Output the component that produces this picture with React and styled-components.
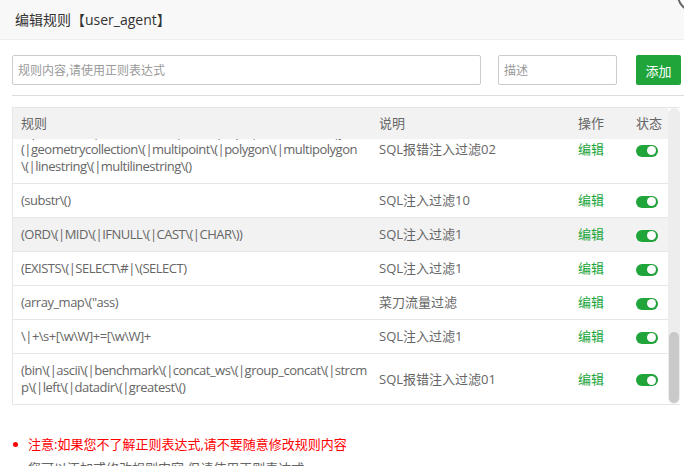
import React, { useLayoutEffect, useRef, useState } from "react";
import styled, { createGlobalStyle } from "styled-components";

const hiddenRules = [
  {
    lines: [
      String.raw`(HTTrack|harvest|audit|dirbuster|pangolin|nmap|sqln|-scan|hydr`,
      String.raw`a|Parser|libwww|BBBike|sqlmap|w3af|owasp|Nikto|fimap|havij|Py`,
      String.raw`cURL|zmeu|BabyKrokodil|netsparker|httperf|bench| SF/)`,
    ],
    desc: "扫描器过滤",
  },
  { lines: [String.raw`(sqlmap|nikto|nessus|acunetix|webscan)`], desc: "扫描器过滤2" },
  { lines: [String.raw`\.\./\.\./`], desc: "目录穿越过滤" },
  { lines: [String.raw`(select.+(from|limit))`], desc: "SQL注入过滤2" },
  { lines: [String.raw`(union(.*?)select)`], desc: "SQL注入过滤3" },
  {
    lines: [
      String.raw`(extractvalue\(|concat\(0x|user\(\)|substring\(|count\(\*\)|sub`,
      String.raw`string\(hex\(|updatexml\()`,
    ],
    desc: "SQL报错注入过滤03",
  },
  { lines: [String.raw`(sleep\((\s*)(\d*)(\s*)\))`], desc: "SQL注入过滤4" },
  { lines: [String.raw`(benchmark\((.*)\,(.*)\))`], desc: "SQL注入过滤5" },
  { lines: [String.raw`(information_schema)`], desc: "SQL注入过滤6" },
  { lines: [String.raw`(into(\s+)+(?:dump|out)file\s*)`], desc: "SQL注入过滤7" },
  { lines: [String.raw`(group\s+by.+\()`], desc: "SQL注入过滤8" },
  { lines: [String.raw`(load_file\()`], desc: "SQL注入过滤9" },
  {
    lines: [
      String.raw`(\s+(and|or)\s+\d+\s*(=|<|>)\s*\d+)|(\s+(and|or)\s+[\w\W]+\s*`,
      String.raw`(=|<|>))`,
    ],
    desc: "SQL注入过滤11",
  },
  { lines: [String.raw`\<(iframe|script|body|img|layer|div)`], desc: "XSS过滤1" },
  { lines: [String.raw`(onmouseover|onerror|onload)\=`], desc: "XSS过滤2" },
  { lines: [String.raw`(eval|assert|system|passthru)\(`], desc: "一句话木马过滤" },
  { lines: [String.raw`(base64_decode\()`], desc: "一句话木马过滤2" },
  { lines: [String.raw`(phpinfo\(\))`], desc: "PHP信息泄露" },
  { lines: [String.raw`(gopher|dict|file|phar)\:\/`], desc: "伪协议过滤" },
  { lines: [String.raw`(java\.lang)`], desc: "java漏洞过滤" },
  {
    lines: [
      String.raw`(\$_(GET|post|cookie|files|session|env|phplib|GLOBALS|SERVER)\[`,
      ")",
    ],
    desc: "变量覆盖过滤",
  },
  { lines: [String.raw`(\$_(GET|POST|COOKIE|REQUEST)\[)`], desc: "变量注入过滤" },
  { lines: [String.raw`(\.(svn|git|htaccess|bash_history))`], desc: "敏感文件过滤" },
  { lines: [String.raw`(python-requests|Go-http-client)`], desc: "脚本采集过滤" },
];

const visibleRules = [
  {
    lines: [
      String.raw`(updatexml\(|extractvalue\(|floor\(|exp\(|name_const\(|join_` + "\\",
      String.raw`(|geometrycollection\(|multipoint\(|polygon\(|multipolygon`,
      String.raw`\(|linestring\(|multilinestring\()`,
    ],
    desc: "SQL报错注入过滤02",
  },
  { lines: [String.raw`(substr\()`], desc: "SQL注入过滤10" },
  { lines: [String.raw`(ORD\(|MID\(|IFNULL\(|CAST\(|CHAR\))`], desc: "SQL注入过滤1", active: true },
  { lines: [String.raw`(EXISTS\(|SELECT\#|\(SELECT)`], desc: "SQL注入过滤1" },
  { lines: [String.raw`(array_map\("ass)`], desc: "菜刀流量过滤" },
  { lines: [String.raw`\|+\s+[\w\W]+=[\w\W]+`], desc: "SQL注入过滤1" },
  {
    lines: [
      String.raw`(bin\(|ascii\(|benchmark\(|concat_ws\(|group_concat\(|strcm`,
      String.raw`p\(|left\(|datadir\(|greatest\()`,
    ],
    desc: "SQL报错注入过滤01",
  },
];

const rules = [...hiddenRules, ...visibleRules];

const App = () => {
  const boxRef = useRef(null);
  const [thumb, setThumb] = useState(72);

  useLayoutEffect(() => {
    const el = boxRef.current;
    if (!el) return;
    el.scrollTop = el.scrollHeight;
    const track = el.clientHeight - 2;
    setThumb(Math.max(20, Math.round((track * el.clientHeight) / el.scrollHeight)));
  }, []);

  return (
    <Layer>
      <GlobalStyle />
      <Title>编辑规则【user_agent】</Title>
      <CloseBtn />
      <Body>
        <FormRow>
          <Input $width={469} placeholder="规则内容,请使用正则表达式" />
          <Input $width={119} $gap={17} placeholder="描述" />
          <AddButton>添加</AddButton>
        </FormRow>
        <Divider />
        <TableWrap>
          <ScrollArea ref={boxRef}>
            <Table>
              <colgroup>
                <col style={{ width: 358 }} />
                <col style={{ width: 199 }} />
                <col style={{ width: 58 }} />
                <col style={{ width: 40 }} />
              </colgroup>
              <thead>
                <tr>
                  <Th>规则</Th>
                  <Th>说明</Th>
                  <Th>操作</Th>
                  <Th>状态</Th>
                </tr>
              </thead>
              <tbody>
                {rules.map((r, i) => (
                  <Row key={i} $active={r.active}>
                    <RuleCell>
                      {r.lines.map((l, j) => (
                        <React.Fragment key={j}>
                          {j > 0 && <br />}
                          {l}
                        </React.Fragment>
                      ))}
                    </RuleCell>
                    <Td>{r.desc}</Td>
                    <Td>
                      <EditLink>编辑</EditLink>
                    </Td>
                    <Td>
                      <Switch />
                    </Td>
                  </Row>
                ))}
              </tbody>
            </Table>
          </ScrollArea>
          <ScrollTrack>
            <ScrollThumb style={{ height: thumb }} />
          </ScrollTrack>
        </TableWrap>
        <Notes>
          <Note $red>注意:如果您不了解正则表达式,请不要随意修改规则内容</Note>
          <Note>您可以添加或修改规则内容,但请使用正则表达式.</Note>
        </Notes>
      </Body>
    </Layer>
  );
};

export default App;

const GlobalStyle = createGlobalStyle`
  html, body {
    margin: 0;
    padding: 0;
    background: #fff;
    overflow: hidden;
  }
  body {
    font-family: "Open Sans", "Noto Sans CJK SC", sans-serif;
    font-size: 13px;
    color: #666;
  }
`;

const Layer = styled.div`
  position: relative;
  width: 684px;
  height: 466px;
  overflow: hidden;
  background: #fff;
`;

const Title = styled.div`
  height: 39px;
  line-height: 39px;
  padding-left: 15px;
  background: #f8f8f8;
  border-bottom: 1px solid #eee;
  font-size: 14px;
  color: #333;
`;

const CloseBtn = styled.span`
  position: absolute;
  top: -22px;
  right: -27px;
  width: 34px;
  height: 34px;
  box-sizing: border-box;
  border: 2px solid #666;
  border-radius: 50%;
  background: #fff;
`;

const Body = styled.div`
  padding: 15px 0 0 12px;
`;

const FormRow = styled.div`
  display: flex;
  align-items: center;
  height: 30px;
`;

const Input = styled.input`
  box-sizing: border-box;
  width: ${(p) => p.$width}px;
  height: 30px;
  margin-left: ${(p) => p.$gap || 0}px;
  padding: 0 5px;
  border: 1px solid #ccc;
  border-radius: 2px;
  font-family: "Open Sans", "Noto Sans CJK SC", sans-serif;
  font-size: 12px;
  color: #555;
  outline: none;
  &::placeholder {
    color: #999;
  }
`;

const AddButton = styled.button`
  box-sizing: border-box;
  width: 45px;
  height: 30px;
  margin-left: 19px;
  padding: 0;
  border: none;
  border-radius: 2px;
  background: #20a53a;
  color: #fff;
  font-family: "Open Sans", "Noto Sans CJK SC", sans-serif;
  font-size: 13px;
`;

const Divider = styled.div`
  height: 1px;
  margin-top: 10px;
  background: #ddd;
`;

const TableWrap = styled.div`
  display: flex;
  box-sizing: border-box;
  width: 668px;
  height: 298px;
  margin-top: 11px;
  border: 1px solid #e6e6e6;
  border-right: none;
`;

const ScrollArea = styled.div`
  flex: 1;
  min-width: 0;
  overflow-y: auto;
  scrollbar-width: none;
  &::-webkit-scrollbar {
    display: none;
  }
`;

const ScrollTrack = styled.div`
  display: flex;
  flex-direction: column;
  justify-content: flex-end;
  box-sizing: border-box;
  width: 12px;
  padding: 1px;
  background: #ededed;
  border-radius: 6px;
`;

const ScrollThumb = styled.div`
  width: 10px;
  border-radius: 5px;
  background: #c9c9c9;
`;

const Table = styled.table`
  width: 100%;
  table-layout: fixed;
  border-collapse: separate;
  border-spacing: 0;
`;

const Th = styled.th`
  position: sticky;
  top: 0;
  z-index: 1;
  height: 31px;
  box-sizing: border-box;
  padding: 7px 8px;
  line-height: 17px;
  background: #f2f2f2;
  color: #666;
  font-weight: normal;
  text-align: left;
  white-space: nowrap;
`;

const Row = styled.tr`
  background: ${(p) => (p.$active ? "#f2f2f2" : "#fff")};
  &:last-child td {
    border-bottom: none;
  }
`;

const Td = styled.td`
  padding: 8px;
  line-height: 17px;
  border-bottom: 1px solid #e6e6e6;
  vertical-align: middle;
  color: #666;
  white-space: nowrap;
`;

const RuleCell = styled(Td)`
  overflow: hidden;
  letter-spacing: -0.5px;
`;

const EditLink = styled.a`
  color: #20a53a;
  cursor: pointer;
`;

const Switch = styled.span`
  position: relative;
  display: inline-block;
  width: 22px;
  height: 12px;
  border-radius: 6px;
  background: #20a53a;
  vertical-align: middle;
  &::after {
    content: "";
    position: absolute;
    top: 1.5px;
    right: 2px;
    width: 9px;
    height: 9px;
    border-radius: 50%;
    background: #fff;
    box-shadow: 0 0 1px rgba(0, 0, 0, 0.2);
  }
`;

const Notes = styled.ul`
  margin: 27px 0 0;
  padding: 0 0 0 1px;
  list-style: none;
`;

const Note = styled.li`
  display: flex;
  align-items: center;
  gap: 10px;
  line-height: 24px;
  font-size: 13px;
  color: ${(p) => (p.$red ? "#f00" : "#666")};
  &::before {
    content: "";
    width: 5px;
    height: 5px;
    border-radius: 50%;
    background: ${(p) => (p.$red ? "#f00" : "#666")};
  }
`;
